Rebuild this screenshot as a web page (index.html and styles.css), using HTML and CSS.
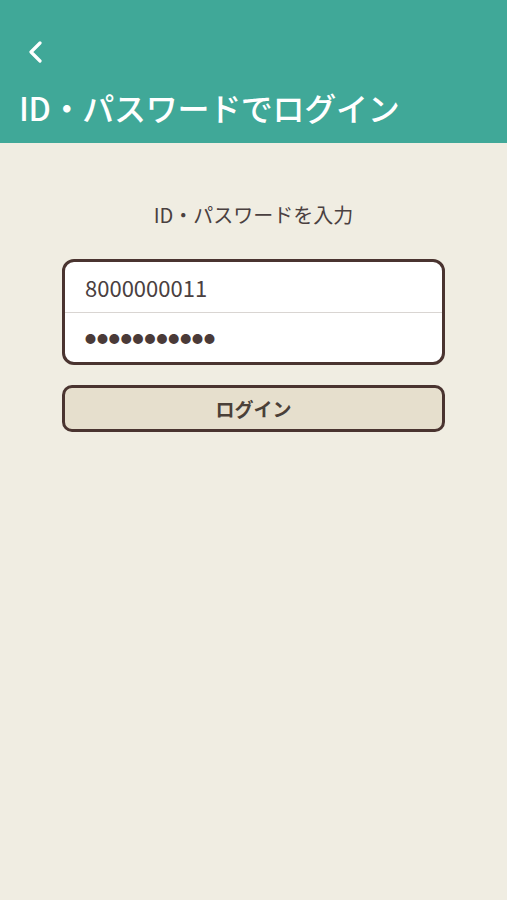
FILE: index.html
```html
<!DOCTYPE html>
<html lang="ja">
<head>
  <meta charset="UTF-8">
  <meta name="viewport" content="width=device-width, initial-scale=1.0">
  <title>ID・パスワードでログイン</title>
  <link rel="stylesheet" href="styles.css">
</head>
<body>

<header class="app-header">
  <div class="back-btn">
    <svg width="18" height="22" viewBox="0 0 18 22">
      <path d="M13 2 L4 11 L13 20" fill="none" stroke="#fff" stroke-width="3.2" stroke-linecap="round" stroke-linejoin="round"/>
    </svg>
  </div>
  <h1>ID・パスワードでログイン</h1>
</header>

<main class="login-container">
  <p class="login-lead">ID・パスワードを入力</p>
  <div class="login-form">
    <div class="form-row">8000000011</div>
    <div class="form-row password">●●●●●●●●●●●</div>
  </div>
  <button class="login-btn">ログイン</button>
</main>

</body>
</html>
```
FILE: styles.css
```css
body {
  margin: 0;
  padding: 0;
  font-family: "Noto Sans CJK JP", "Noto Sans", sans-serif;
  background-color: #f0ede2;
  min-height: 100vh;
}

.app-header {
  background-color: #40a898;
  height: 143px;
  box-sizing: border-box;
  padding: 41px 0 0 19px;
  color: white;
}

.back-btn {
  height: 24px;
  margin-left: 8px;
}

.back-btn svg {
  display: block;
}

.app-header h1 {
  margin: 22px 0 0;
  font-size: 32px;
  line-height: 40px;
  font-weight: 500;
  letter-spacing: -0.3px;
}

.login-container {
  padding: 0 62px;
}

.login-lead {
  text-align: center;
  font-size: 20px;
  color: #4a4040;
  margin: 58px 0 30px;
  line-height: 28px;
}

.login-form {
  background-color: white;
  border: 3px solid #4a3430;
  border-radius: 12px;
  overflow: hidden;
}

.form-row {
  height: 50px;
  display: flex;
  align-items: center;
  padding-left: 20px;
  font-size: 22px;
  color: #4a4040;
}

.form-row + .form-row {
  border-top: 1px solid #d9d5d2;
  height: 49px;
}

.password {
  font-size: 11px;
  letter-spacing: 0.9px;
  color: #4a3a38;
}

.login-btn {
  display: block;
  width: 100%;
  height: 47px;
  margin-top: 20px;
  background-color: #e6dfcd;
  border: 3px solid #4a3430;
  border-radius: 10px;
  font-family: inherit;
  font-size: 19px;
  font-weight: bold;
  color: #4a4038;
  cursor: pointer;
}
```
